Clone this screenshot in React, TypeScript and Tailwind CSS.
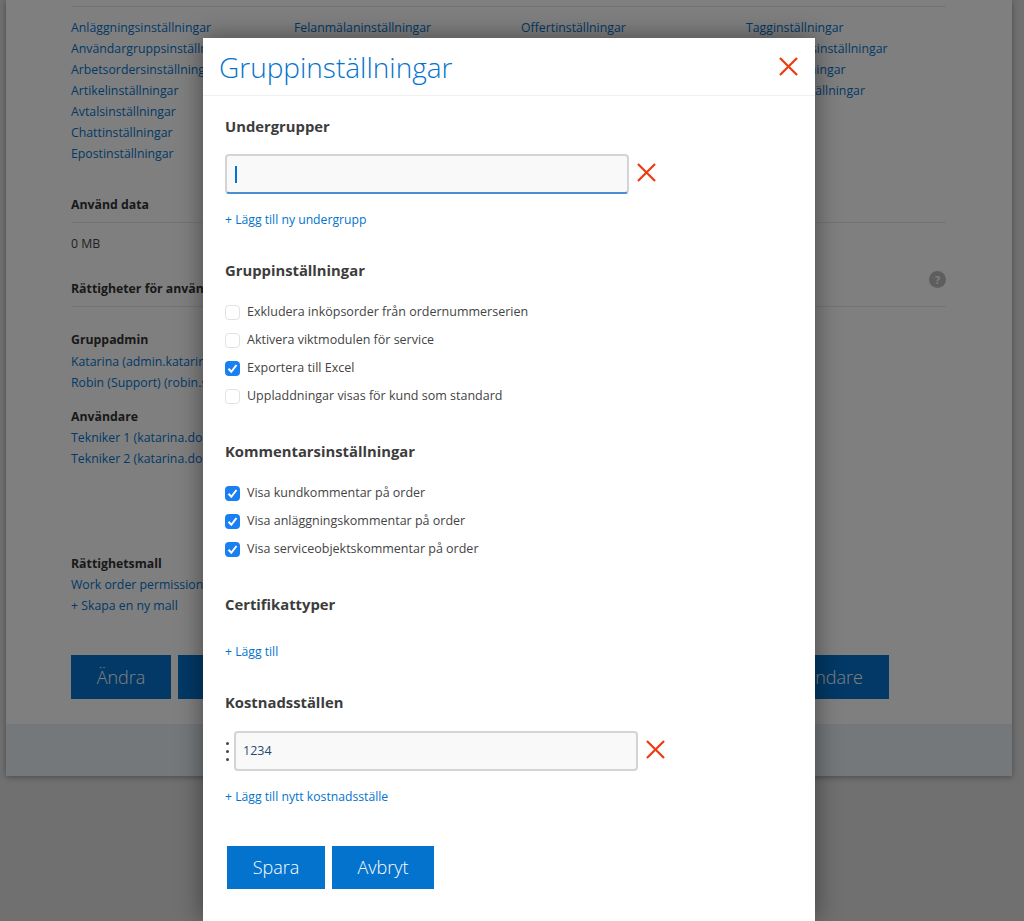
const settingsColumns = [
  {
    width: 'w-[223px]',
    links: [
      'Anläggningsinställningar',
      'Användargruppsinställningar',
      'Arbetsordersinställningar',
      'Artikelinställningar',
      'Avtalsinställningar',
      'Chattinställningar',
      'Epostinställningar',
    ],
  },
  { width: 'w-[227px]', links: ['Felanmälaninställningar'] },
  { width: 'w-[225px]', links: ['Offertinställningar'] },
  {
    width: 'w-[200px]',
    links: ['Tagginställningar', 'Timrapportsinställningar', 'Tjänstebokningar', 'Tidplansinställningar'],
  },
];

function RedX({ size = 19 }: { size?: number }) {
  return (
    <svg width={size} height={size} viewBox="0 0 20 20" fill="none" stroke="#ee3a10" strokeWidth="2.3">
      <line x1="1" y1="1" x2="19" y2="19" />
      <line x1="19" y1="1" x2="1" y2="19" />
    </svg>
  );
}

function Checkbox({ label, checked = false }: { label: string; checked?: boolean }) {
  return (
    <div className="flex items-center h-[28px]">
      {checked ? (
        <span className="flex items-center justify-center w-[15px] h-[15px] rounded-[4px] bg-[#1a7ff0]">
          <svg width="11" height="11" viewBox="0 0 11 11" fill="none" stroke="#ffffff" strokeWidth="2">
            <path d="M1.5 5.8 L4.3 8.8 L9.5 2" />
          </svg>
        </span>
      ) : (
        <span className="w-[15px] h-[15px] rounded-[4px] border border-[#e2e2e2] bg-white" />
      )}
      <span className="ml-[7px] text-[12.5px] text-[#444444]">{label}</span>
    </div>
  );
}

function SectionHeading({ children, className }: { children: string; className: string }) {
  return <h2 className={`text-[14.8px] leading-[20px] font-bold text-[#3c3c3c] ${className}`}>{children}</h2>;
}

function BackgroundPage() {
  return (
    <div className="w-[1006px] h-[776px] ml-[6px] flex flex-col bg-white shadow-[0_1px_6px_rgba(0,0,0,0.35)]">
      <div className="flex-1 pl-[65px] pr-[66px] text-[12.3px] leading-[21px] text-[#0473cd] whitespace-nowrap">
        <div className="h-[7px] border-b border-[#e8e8e8]" />
        <div className="flex mt-[10px]">
          {settingsColumns.map((col) => (
            <div key={col.links[0]} className={col.width}>
              {col.links.map((link) => (
                <div key={link}>{link}</div>
              ))}
            </div>
          ))}
        </div>

        <div className="mt-[30px] font-bold text-[#333333] pb-[7px] border-b border-[#e8e8e8]">Använd data</div>
        <div className="mt-[10px] text-[#444444]">0 MB</div>
        <div className="mt-[24px] flex items-center justify-between pb-[7px] border-b border-[#e8e8e8] relative">
          <span className="font-bold text-[#333333]">Rättigheter för använ</span>
          <span className="absolute right-0 -top-[7px] flex items-center justify-center w-[17px] h-[17px] rounded-full bg-[#bcbcbc] text-white text-[11px] font-bold">
            ?
          </span>
        </div>

        <div className="mt-[22px] mb-[1px] font-bold text-[#333333]">Gruppadmin</div>
        <div>Katarina (admin.katarin</div>
        <div>Robin (Support) (robin.s</div>
        <div className="mt-[13px] font-bold text-[#333333]">Användare</div>
        <div>Tekniker 1 (katarina.do</div>
        <div>Tekniker 2 (katarina.do</div>
        <div className="mt-[84px] font-bold text-[#333333]">Rättighetsmall</div>
        <div>Work order permissions</div>
        <div>+ Skapa en ny mall</div>

        <div className="flex mt-[39px] gap-[7px] text-[18px] leading-[24px] font-light text-white">
          <div className="w-[100px] h-[44px] flex items-center justify-center bg-[#0473cd]">Ändra</div>
          <div className="w-[604px] h-[44px] bg-[#0473cd]" />
          <div className="w-[100px] h-[44px] flex items-center justify-end pr-[26px] bg-[#0473cd]">Användare</div>
        </div>
      </div>
      <div className="h-[52px] bg-[#e8f0f4]" />
    </div>
  );
}

function SettingsModal() {
  return (
    <div className="absolute left-[203px] top-[38px] w-[612px] h-[883px] bg-white shadow-[0_0_24px_rgba(0,0,0,0.45)] overflow-hidden">
      <div className="h-[58px] flex items-center justify-between pl-[16px] pr-[17px] border-b border-[#f0f0f0]">
        <h1 className="text-[28px] font-light text-[#0473cd]">Gruppinställningar</h1>
        <RedX />
      </div>

      <div className="pl-[22px]">
        <SectionHeading className="mt-[20px]">Undergrupper</SectionHeading>
        <div className="flex items-center mt-[18px]">
          <div className="w-[404px] h-[40px] flex items-center pl-[8px] rounded-[4px] bg-[#f9f9f9] border-2 border-[#d4d4d4] border-b-[#4a90d0]">
            <span className="w-[2px] h-[17px] bg-[#0473cd]" />
          </div>
          <span className="ml-[8px] -mt-[4px] flex">
            <RedX />
          </span>
        </div>
        <div className="mt-[16px] text-[12.2px] leading-[20px] text-[#0473cd]">+ Lägg till ny undergrupp</div>

        <SectionHeading className="mt-[30px]">Gruppinställningar</SectionHeading>
        <div className="mt-[18px]">
          <Checkbox label="Exkludera inköpsorder från ordernummerserien" />
          <Checkbox label="Aktivera viktmodulen för service" />
          <Checkbox label="Exportera till Excel" checked />
          <Checkbox label="Uppladdningar visas för kund som standard" />
        </div>

        <SectionHeading className="mt-[31px]">Kommentarsinställningar</SectionHeading>
        <div className="mt-[18px]">
          <Checkbox label="Visa kundkommentar på order" checked />
          <Checkbox label="Visa anläggningskommentar på order" checked />
          <Checkbox label="Visa serviceobjektskommentar på order" checked />
        </div>

        <SectionHeading className="mt-[31px]">Certifikattyper</SectionHeading>
        <div className="mt-[28px] text-[12.2px] leading-[20px] text-[#0473cd]">+ Lägg till</div>

        <SectionHeading className="mt-[30px]">Kostnadsställen</SectionHeading>
        <div className="flex items-center mt-[19px]">
          <div className="w-[9px] flex flex-col items-start gap-[5px] pl-[1px]">
            <span className="w-[3px] h-[3px] rounded-full bg-[#444444]" />
            <span className="w-[3px] h-[3px] rounded-full bg-[#444444]" />
            <span className="w-[3px] h-[3px] rounded-full bg-[#444444]" />
          </div>
          <div className="w-[404px] h-[40px] flex items-center pl-[7px] rounded-[4px] bg-[#f9f9f9] border-2 border-[#d4d4d4] text-[12.5px] text-[#1d4a70]">
            1234
          </div>
          <span className="ml-[8px] -mt-[4px] flex">
            <RedX />
          </span>
        </div>
        <div className="mt-[16px] text-[12.2px] leading-[20px] text-[#0473cd]">+ Lägg till nytt kostnadsställe</div>

        <div className="flex gap-[7px] mt-[39px] ml-[2px] text-[18px] font-light text-white">
          <button className="w-[98px] h-[43px] bg-[#0473cd]">Spara</button>
          <button className="w-[102px] h-[43px] bg-[#0473cd]">Avbryt</button>
        </div>
      </div>
    </div>
  );
}

export default function App() {
  return (
    <div className="relative w-[1024px] h-[921px] overflow-hidden bg-[#e0e0e0] font-['Open_Sans',sans-serif]">
      <BackgroundPage />
      <div className="absolute inset-0 bg-black/50" />
      <SettingsModal />
    </div>
  );
}
